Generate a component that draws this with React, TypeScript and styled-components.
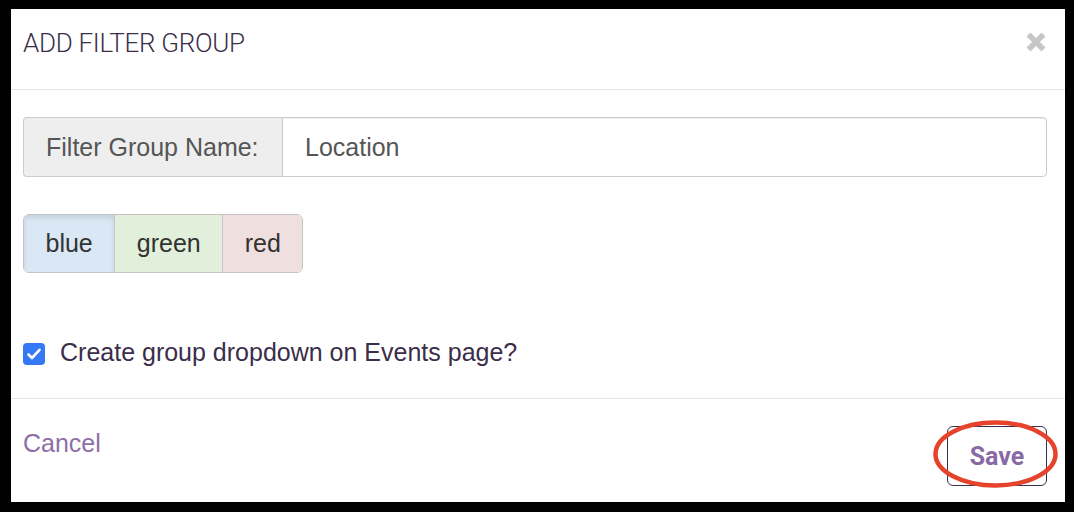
import styled, { createGlobalStyle } from "styled-components";

const GlobalStyle = createGlobalStyle`
  html, body {
    margin: 0;
    padding: 0;
    background: #000;
  }
  * {
    box-sizing: border-box;
  }
`;

const swatches = [
  { name: "blue", bg: "#dae7f4", active: true },
  { name: "green", bg: "#e2efda", active: false },
  { name: "red", bg: "#efdfdf", active: false },
];

function App() {
  return (
    <>
      <GlobalStyle />
      <Modal>
        <Header>
          <Title>ADD FILTER GROUP</Title>
          <CloseButton aria-label="Close">
            <svg width="20" height="20" viewBox="0 0 20 20">
              <path
                d="M2.5 2.5 L17.5 17.5 M17.5 2.5 L2.5 17.5"
                stroke="#c6c6c6"
                strokeWidth="5.5"
                strokeLinecap="butt"
              />
            </svg>
          </CloseButton>
        </Header>
        <Body>
          <InputGroup>
            <Addon>Filter Group Name:</Addon>
            <TextInput defaultValue="Location" />
          </InputGroup>
          <SwatchGroup>
            {swatches.map((item) => (
              <Swatch key={item.name} $bg={item.bg} $active={item.active}>
                {item.name}
              </Swatch>
            ))}
          </SwatchGroup>
          <CheckRow>
            <CheckBox>
              <svg width="14" height="12" viewBox="0 0 14 12">
                <path
                  d="M1.5 6.5 L5 10 L12.5 1.8"
                  stroke="#fff"
                  strokeWidth="2.6"
                  fill="none"
                  strokeLinecap="round"
                  strokeLinejoin="round"
                />
              </svg>
            </CheckBox>
            Create group dropdown on Events page?
          </CheckRow>
        </Body>
        <Footer>
          <CancelLink>Cancel</CancelLink>
          <SaveWrapper>
            <SaveButton>Save</SaveButton>
            <Highlight width="125" height="68" viewBox="0 0 125 68">
              <ellipse
                cx="62.5"
                cy="34"
                rx="60"
                ry="31.5"
                fill="none"
                stroke="#e5432b"
                strokeWidth="4.5"
              />
            </Highlight>
          </SaveWrapper>
        </Footer>
      </Modal>
    </>
  );
}

export default App;

const Modal = styled.div`
  margin: 9px 9px 0 11px;
  height: 493px;
  background: #fff;
  display: flex;
  flex-direction: column;
  font-family: "Liberation Sans", Arial, sans-serif;
`;

const Header = styled.div`
  height: 81px;
  padding: 19px 19px 0 12px;
  border-bottom: 1px solid #e5e5e5;
  display: flex;
  align-items: flex-start;
  justify-content: space-between;
`;

const Title = styled.h4`
  margin: 0;
  font-family: Roboto, sans-serif;
  font-weight: 300;
  font-size: 26px;
  color: #3a2e4a;
  letter-spacing: -0.3px;
  line-height: 30px;
`;

const CloseButton = styled.button`
  border: 0;
  background: none;
  padding: 0;
  display: flex;
  margin-top: 4px;
  cursor: pointer;
`;

const Body = styled.div`
  padding: 27px 18px 0 12px;
  height: 309px;
  border-bottom: 1px solid #e5e5e5;
`;

const InputGroup = styled.div`
  display: flex;
  height: 60px;
  font-size: 25px;
  color: #555;
`;

const Addon = styled.span`
  width: 259px;
  display: flex;
  align-items: center;
  padding-left: 22px;
  background: #eee;
  border: 1px solid #ccc;
  border-right: 0;
  border-radius: 4px 0 0 4px;
`;

const TextInput = styled.input`
  flex: 1;
  height: 60px;
  border: 1px solid #ccc;
  border-radius: 0 4px 4px 0;
  padding: 0 22px;
  font-family: "Liberation Sans", Arial, sans-serif;
  font-size: 25px;
  color: #555;
  box-shadow: inset 0 1px 1px rgba(0, 0, 0, 0.075);
  outline: none;
`;

const SwatchGroup = styled.div`
  display: inline-flex;
  margin-top: 37px;
  height: 59px;
  border: 1px solid #c4c4c4;
  border-radius: 6px;
  overflow: hidden;
`;

const Swatch = styled.span<{ $bg: string; $active: boolean }>`
  display: flex;
  align-items: center;
  padding: 0 21.5px;
  font-size: 25px;
  color: #333;
  background: ${(p) => p.$bg};
  box-shadow: ${(p) => (p.$active ? "inset 0 3px 5px rgba(0, 0, 0, 0.1)" : "none")};
  & + & {
    border-left: 1px solid #c8c8c8;
  }
`;

const CheckRow = styled.label`
  display: flex;
  align-items: center;
  gap: 15px;
  margin-top: 64px;
  height: 30px;
  font-size: 25px;
  color: #3a2e4a;
`;

const CheckBox = styled.span`
  width: 22px;
  height: 22px;
  border-radius: 4px;
  background: #3478f6;
  display: flex;
  align-items: center;
  justify-content: center;
  margin-top: 4px;
`;

const Footer = styled.div`
  flex: 1;
  padding: 27px 18px 0 12px;
  display: flex;
  align-items: flex-start;
  justify-content: space-between;
`;

const CancelLink = styled.a`
  margin-top: 2px;
  line-height: 30px;
  font-size: 25px;
  color: #8e6ea8;
  cursor: pointer;
`;

const SaveWrapper = styled.div`
  position: relative;
`;

const SaveButton = styled.button`
  width: 100px;
  height: 60px;
  border: 1px solid #3a2e4a;
  border-radius: 6px;
  background: #fff;
  font-family: Roboto, sans-serif;
  font-weight: 700;
  font-size: 25px;
  color: #8a6aa6;
  padding: 0;
`;

const Highlight = styled.svg`
  position: absolute;
  left: -14px;
  top: -6px;
  pointer-events: none;
`;
